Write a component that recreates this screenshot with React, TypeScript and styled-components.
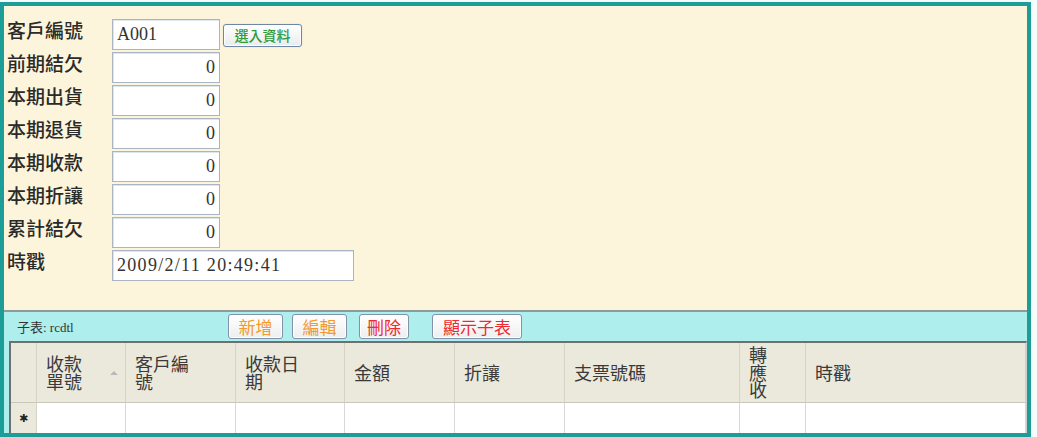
import React from "react";
import styled, { createGlobalStyle } from "styled-components";

const GlobalStyle = createGlobalStyle`
  html, body {
    margin: 0;
    padding: 0;
    background: #f6fbfb;
  }
  #root {
    width: 1037px;
    height: 437px;
    overflow: hidden;
  }
`;

type Field = {
  label: string;
  value: string;
  align?: "left" | "right";
  width?: number;
  spacing?: number;
  pick?: boolean;
};

const fields: Field[] = [
  { label: "客戶編號", value: "A001", align: "left", pick: true },
  { label: "前期結欠", value: "0" },
  { label: "本期出貨", value: "0" },
  { label: "本期退貨", value: "0" },
  { label: "本期收款", value: "0" },
  { label: "本期折讓", value: "0" },
  { label: "累計結欠", value: "0" },
  { label: "時戳", value: "2009/2/11 20:49:41", align: "left", width: 242, spacing: 1.3 },
];

const tools = [
  { text: "新增", tone: "#f39a2c", w: 55, ml: 0 },
  { text: "編輯", tone: "#f39a2c", w: 55, ml: 9 },
  { text: "刪除", tone: "#ee2a30", w: 50, ml: 12 },
  { text: "顯示子表", tone: "#ee2a30", w: 90, ml: 23 },
];

const columns = ["收款\n單號", "客戶編\n號", "收款日\n期", "金額", "折讓", "支票號碼", "轉\n應\n收", "時戳"];

export default function App() {
  return (
    <>
      <GlobalStyle />
      <Frame>
        <Form>
          {fields.map((f) => (
            <Row key={f.label}>
              <Label>{f.label}</Label>
              <Input
                readOnly
                value={f.value}
                $align={f.align ?? "right"}
                $w={f.width ?? 108}
                $spacing={f.spacing ?? 0}
              />
              {f.pick && <PickButton>選入資料</PickButton>}
            </Row>
          ))}
        </Form>
        <Panel>
          <Toolbar>
            <Caption>子表: rcdtl</Caption>
            {tools.map((t) => (
              <ToolButton key={t.text} $tone={t.tone} $w={t.w} $ml={t.ml}>
                {t.text}
              </ToolButton>
            ))}
          </Toolbar>
          <Grid>
            <HeadCell />
            {columns.map((c, i) => (
              <HeadCell key={c}>
                <span>{c}</span>
                {i === 0 && <SortArrow />}
              </HeadCell>
            ))}
            <RowMark>✱</RowMark>
            {columns.map((c) => (
              <DataCell key={c} />
            ))}
          </Grid>
        </Panel>
      </Frame>
    </>
  );
}

const Frame = styled.div`
  box-sizing: border-box;
  width: 1031px;
  height: 435px;
  margin-top: 2px;
  border: 4px solid #1d9d97;
  background: #fdf5db;
  display: flex;
  flex-direction: column;
`;

const Form = styled.div`
  flex: 1;
  display: flex;
  flex-direction: column;
  gap: 2px;
  padding: 13px 0 0 3px;
`;

const Row = styled.div`
  display: flex;
  align-items: flex-start;
  height: 31px;
`;

const Label = styled.div`
  width: 105px;
  font-family: "Noto Sans CJK TC", sans-serif;
  font-size: 19px;
  font-weight: 500;
  line-height: 22px;
  color: #2a2a2a;
`;

const Input = styled.input<{ $align: "left" | "right"; $w: number; $spacing: number }>`
  box-sizing: border-box;
  width: ${({ $w }) => $w}px;
  height: 31px;
  margin: 0;
  padding: 0 4px;
  border: 1px solid #aab5c3;
  box-shadow: inset 1px 1px 0 #dfe5ec;
  background: #fff;
  font-family: "Liberation Serif", serif;
  font-size: 18px;
  letter-spacing: ${({ $spacing }) => $spacing}px;
  color: #333;
  text-align: ${({ $align }) => $align};
  outline: none;
`;

const PickButton = styled.button`
  box-sizing: border-box;
  margin: 5px 0 0 3px;
  width: 79px;
  height: 23px;
  padding: 0;
  border: 1px solid #6f87a6;
  border-radius: 3px;
  background: linear-gradient(#ffffff, #e9ebee);
  box-shadow: inset 0 0 0 1px #fff, 0 0 1px #9fb6d2;
  font-family: "Noto Sans CJK TC", sans-serif;
  font-size: 14px;
  font-weight: 500;
  line-height: 21px;
  color: #2f9a36;
`;

const Panel = styled.div`
  background: #aeeeec;
  border-top: 2px solid #8f9b9b;
`;

const Toolbar = styled.div`
  height: 29px;
  display: flex;
  align-items: center;
  padding-left: 13px;
`;

const Caption = styled.div`
  width: 211px;
  font-family: "Liberation Serif", "Noto Sans CJK TC", serif;
  font-size: 13px;
  color: #333;
`;

const ToolButton = styled.button<{ $tone: string; $w: number; $ml: number }>`
  box-sizing: border-box;
  width: ${({ $w }) => $w}px;
  height: 25px;
  margin: 0 0 0 ${({ $ml }) => $ml}px;
  padding: 0;
  border: 1px solid #7f93ac;
  border-radius: 3px;
  background: linear-gradient(#ffffff, #eeeeee);
  box-shadow: inset 0 0 0 1px #fff;
  font-family: "Noto Sans CJK TC", sans-serif;
  font-size: 17px;
  line-height: 23px;
  color: ${({ $tone }) => $tone};
`;

const Grid = styled.div`
  margin-left: 5px;
  border-top: 2px solid #6f6f6f;
  border-left: 2px solid #6f6f6f;
  border-right: 1px solid #cfcfcf;
  background: #fff;
  display: grid;
  grid-template-columns: 26px 89px 110px 109px 110px 110px 175px 66px 1fr;
  grid-template-rows: 60px 30px;
`;

const HeadCell = styled.div`
  box-sizing: border-box;
  display: flex;
  align-items: center;
  padding-left: 9px;
  background: #ebe9dc;
  border-right: 1px solid #d5d2c6;
  border-bottom: 1px solid #c9c6ba;
  font-family: "Noto Sans CJK TC", sans-serif;
  font-size: 18px;
  line-height: 17.5px;
  color: #3a3a3a;
  white-space: pre-line;
`;

const SortArrow = styled.i`
  margin: 0 7px 0 auto;
  width: 0;
  height: 0;
  border-left: 4px solid transparent;
  border-right: 4px solid transparent;
  border-bottom: 4px solid #b9b9b9;
`;

const RowMark = styled.div`
  box-sizing: border-box;
  display: flex;
  align-items: center;
  justify-content: center;
  background: #ebe9dc;
  border-right: 1px solid #d5d2c6;
  font-family: "DejaVu Sans", sans-serif;
  font-size: 11px;
  color: #222;
`;

const DataCell = styled.div`
  box-sizing: border-box;
  background: #fff;
  border-right: 1px solid #d8d8d8;
`;
